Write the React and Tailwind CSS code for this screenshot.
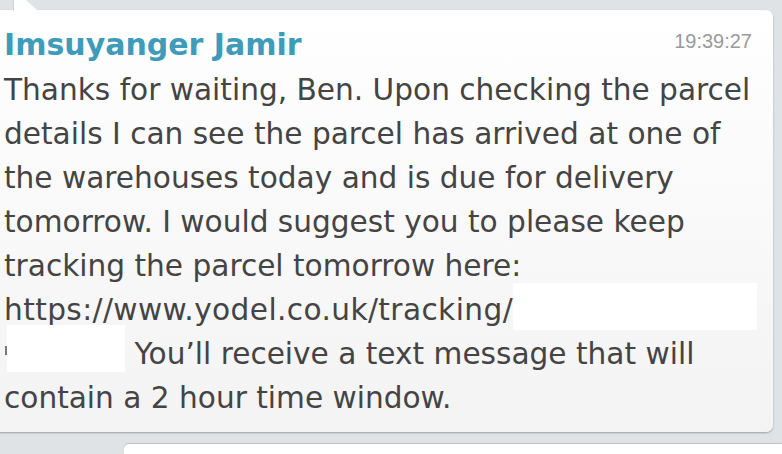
export default function App() {
  const body = "text-[29.6px] leading-[44px] text-[#444444] mt-[4px]";
  return (
    <div className="w-[782px] h-[454px] overflow-hidden bg-[#dfe3e6] relative" style={{ fontFamily: '"DejaVu Sans", Verdana, sans-serif' }}>
      <svg className="absolute left-0 top-0" width="50" height="12" viewBox="0 0 50 12">
        <polygon points="14,0 26,0 38,11 14,11" fill="#ffffff" />
        <line x1="13.5" y1="0" x2="13.5" y2="11" stroke="#cfd3d6" strokeWidth="1" />
      </svg>
      <div className="pt-[10px] pr-[9px]">
        <div className="-ml-[20px] rounded-[7px] bg-gradient-to-b from-white to-[#f3f3f3] shadow-[0_1px_2px_rgba(0,0,0,0.3)] h-[422px] pl-[24px] pr-[21px] pt-[16px]">
          <div className="flex justify-between items-start">
            <div className="text-[30px] leading-[38px] font-bold text-[#3e9bb9]">Imsuyanger Jamir</div>
            <div className="text-[20px] leading-[24px] text-[#9a9a9a] pt-[3px]" style={{ fontFamily: '"Liberation Sans", Arial, sans-serif' }}>19:39:27</div>
          </div>
          <div className={body}>
            <div>Thanks for waiting, Ben. Upon checking the parcel</div>
            <div>details I can see the parcel has arrived at one of</div>
            <div>the warehouses today and is due for delivery</div>
            <div>tomorrow. I would suggest you to please keep</div>
            <div>tracking the parcel tomorrow here:</div>
            <div className="flex items-start h-[44px]">
              <span className="shrink-0 tracking-[0.4px]">https://www.yodel.co.uk/tracking/</span>
              <span className="shrink-0 inline-block w-[244px] h-[47px] -mt-[5px] bg-white"></span>
            </div>
            <div className="flex items-start h-[44px]">
              <span className="inline-block w-[2px] h-[9px] bg-[#777] mt-[14px] ml-[1px]"></span>
              <span className="inline-block w-[118px] h-[47px] -mt-[7px] bg-white"></span>
              <span className="whitespace-pre"> You’ll receive a text message that will</span>
            </div>
            <div>contain a 2 hour time window.</div>
          </div>
        </div>
      </div>
      <div className="absolute left-[124px] right-0 top-[444px] h-[20px] bg-white rounded-tl-[5px] shadow-[0_-1px_1px_rgba(0,0,0,0.15)]"></div>
    </div>
  );
}
